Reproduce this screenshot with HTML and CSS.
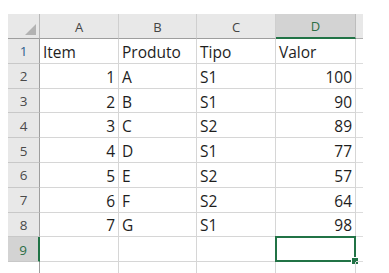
FILE: index.html
```html
<!DOCTYPE html>
<html>
<head>
<meta charset="utf-8">
<link rel="stylesheet" href="styles.css">
</head>
<body>
<div class="sheet">
  <div class="grid">
    <div class="corner"><span class="tri"></span></div>
    <div class="ch">A</div>
    <div class="ch">B</div>
    <div class="ch">C</div>
    <div class="ch sel">D</div>
    <div class="ext top"></div>

    <div class="rh first">1</div>
    <div class="c">Item</div><div class="c">Produto</div><div class="c">Tipo</div><div class="c">Valor</div><div class="ext"></div>

    <div class="rh">2</div>
    <div class="c n">1</div><div class="c">A</div><div class="c">S1</div><div class="c n">100</div><div class="ext"></div>
    <div class="rh">3</div>
    <div class="c n">2</div><div class="c">B</div><div class="c">S1</div><div class="c n">90</div><div class="ext"></div>
    <div class="rh">4</div>
    <div class="c n">3</div><div class="c">C</div><div class="c">S2</div><div class="c n">89</div><div class="ext"></div>
    <div class="rh">5</div>
    <div class="c n">4</div><div class="c">D</div><div class="c">S1</div><div class="c n">77</div><div class="ext"></div>
    <div class="rh">6</div>
    <div class="c n">5</div><div class="c">E</div><div class="c">S2</div><div class="c n">57</div><div class="ext"></div>
    <div class="rh">7</div>
    <div class="c n">6</div><div class="c">F</div><div class="c">S2</div><div class="c n">64</div><div class="ext"></div>
    <div class="rh">8</div>
    <div class="c n">7</div><div class="c">G</div><div class="c">S1</div><div class="c n">98</div><div class="ext"></div>
    <div class="rh sel">9</div>
    <div class="c"></div><div class="c"></div><div class="c"></div><div class="c active"><span class="box"></span><span class="handle"></span></div><div class="ext"></div>

    <div class="rh tail"></div>
    <div class="c tail"></div><div class="c tail"></div><div class="c tail"></div><div class="c tail"></div><div class="ext tail"></div>
  </div>
</div>
</body>
</html>
```

FILE: styles.css
```css
html, body {
  margin: 0;
  padding: 0;
  background: #ffffff;
  overflow: hidden;
}
.sheet {
  width: 389px;
  height: 273px;
  padding: 14px 0 0 8px;
  box-sizing: border-box;
  background: #ffffff;
}
.grid {
  display: grid;
  grid-template-columns: 32px 79px 78px 79px 80px 7px;
  grid-template-rows: 25px repeat(9, 24.8px) 20px;
  font-family: "Open Sans", "Liberation Sans", sans-serif;
  color: #1e1e1e;
}
.grid > div {
  box-sizing: border-box;
  position: relative;
}
.corner {
  background: #e8e8e8;
  border-right: 1px solid #b8b8b8;
  border-bottom: 1px solid #9e9e9e;
}
.tri {
  position: absolute;
  right: 3px;
  bottom: 3px;
  width: 0;
  height: 0;
  border-left: 11px solid transparent;
  border-bottom: 11px solid #b3b3b3;
}
.ch {
  background: #e8e8e8;
  border-right: 1px solid #cfcfcf;
  border-bottom: 1px solid #9e9e9e;
  display: flex;
  align-items: center;
  justify-content: center;
  font-size: 13px;
  color: #444;
  padding-top: 1px;
}
.ch.sel {
  background: #d3d3d3;
  color: #2c6e45;
  border-bottom: 2px solid #217346;
  border-right: 1px solid #bdbdbd;
}
.ext {
  border-bottom: 1px solid #dcdcdc;
}
.ext.top {
  background: #e8e8e8;
  border-bottom: 1px solid #b0b0b0;
}
.ext.tail { border-bottom: none; }
.rh {
  background: #e8e8e8;
  border-right: 1px solid #9e9e9e;
  border-bottom: 1px solid #c8c8c8;
  display: flex;
  align-items: center;
  justify-content: center;
  font-size: 13.5px;
  color: #4a4a4a;
  padding-top: 1px;
}
.rh.first { color: #2f5f8f; }
.rh.sel {
  background: #d3d3d3;
  color: #2c6e45;
  border-right: 2px solid #217346;
}
.rh.tail {
  background: #ffffff;
  border-bottom: none;
}
.c {
  border-right: 1px solid #d6d6d6;
  border-bottom: 1px solid #d6d6d6;
  display: flex;
  align-items: center;
  font-size: 15.5px;
  padding: 2px 3px 0 3px;
  white-space: nowrap;
}
.c.n { justify-content: flex-end; }
.c.tail { border-bottom: none; }
.box {
  position: absolute;
  left: -1px;
  top: -1px;
  right: -1px;
  bottom: -1px;
  border: 2px solid #217346;
}
.handle {
  position: absolute;
  right: -4px;
  bottom: -4px;
  width: 6px;
  height: 6px;
  background: #217346;
  border: 1px solid #ffffff;
}
```
